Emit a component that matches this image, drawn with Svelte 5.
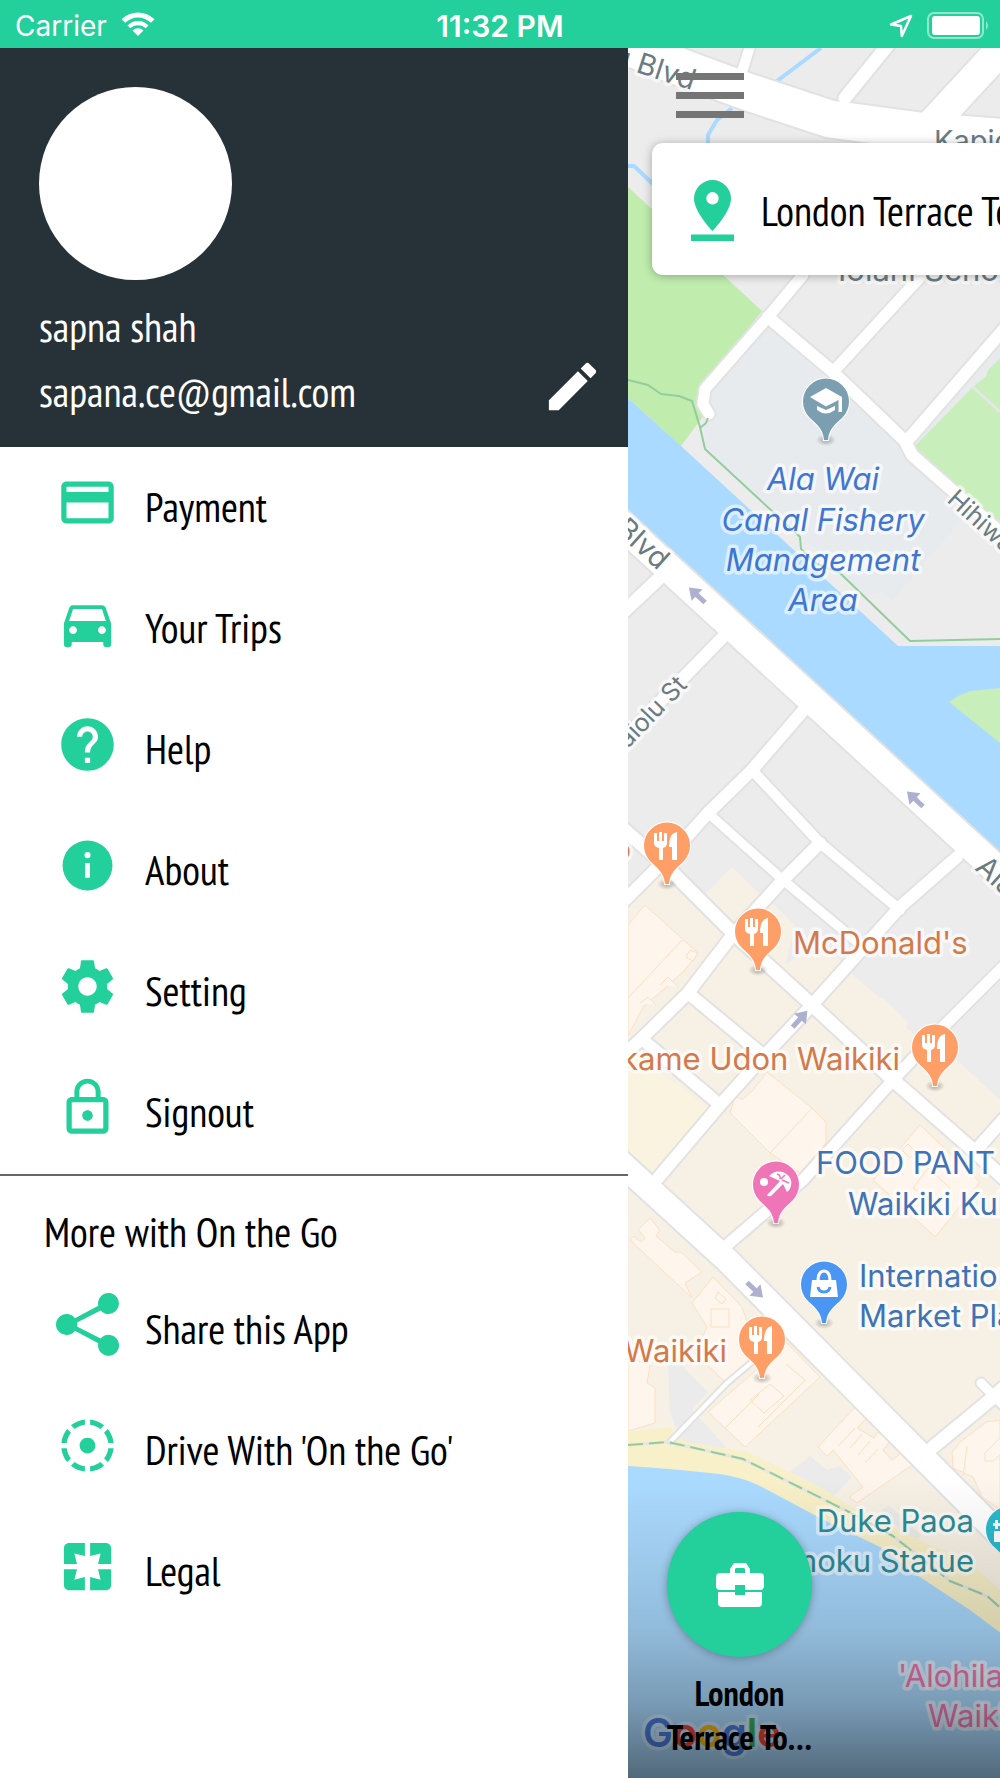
<script>
  // main entries of the drawer, the icons are on a 24x24 grid
  const menu = [
    {
      label: "Payment",
      icon: "M20 4H4c-1.11 0-1.99.89-1.99 2L2 18c0 1.11.89 2 2 2h16c1.11 0 2-.89 2-2V6c0-1.11-.89-2-2-2zm0 14H4v-6h16v6zm0-10H4V6h16v2z",
    },
    {
      label: "Your Trips",
      icon: "M18.92 6.01C18.72 5.42 18.16 5 17.5 5h-11c-.66 0-1.21.42-1.42 1.01L3 12v8c0 .55.45 1 1 1h1c.55 0 1-.45 1-1v-1h12v1c0 .55.45 1 1 1h1c.55 0 1-.45 1-1v-8l-2.08-5.99zM6.5 16c-.83 0-1.5-.67-1.5-1.5S5.67 13 6.5 13s1.5.67 1.5 1.5S7.33 16 6.5 16zm11 0c-.83 0-1.5-.67-1.5-1.5s.67-1.5 1.5-1.5 1.5.67 1.5 1.5-.67 1.5-1.5 1.5zM5 11l1.5-4.5h11L19 11H5z",
    },
    {
      label: "Help",
      icon: "M12 2C6.48 2 2 6.48 2 12s4.48 10 10 10 10-4.48 10-10S17.52 2 12 2zm1 17h-2v-2h2v2zm2.07-7.75l-.9.92C13.45 12.9 13 13.5 13 15h-2v-.5c0-1.1.45-2.1 1.17-2.83l1.24-1.26c.37-.36.59-.86.59-1.41 0-1.1-.9-2-2-2s-2 .9-2 2H8c0-2.21 1.79-4 4-4s4 1.79 4 4c0 .88-.36 1.68-.93 2.25z",
    },
    {
      label: "About",
      icon: "M12 2.5a9.5 9.5 0 1 0 0 19 9.5 9.5 0 0 0 0-19zm.9 14.2h-1.8V11h1.8v5.7zM12 9.2a1.15 1.15 0 1 1 0-2.3 1.15 1.15 0 0 1 0 2.3z",
    },
    {
      label: "Setting",
      icon: "M19.43 12.98c.04-.32.07-.64.07-.98s-.03-.66-.07-.98l2.11-1.65c.19-.15.24-.42.12-.64l-2-3.46c-.12-.22-.39-.3-.61-.22l-2.49 1c-.52-.4-1.08-.73-1.69-.98l-.38-2.65C14.46 2.18 14.25 2 14 2h-4c-.25 0-.46.18-.49.42l-.38 2.65c-.61.25-1.17.59-1.69.98l-2.49-1c-.23-.09-.49 0-.61.22l-2 3.46c-.13.22-.07.49.12.64l2.11 1.65c-.04.32-.07.65-.07.98s.03.66.07.98l-2.11 1.65c-.19.15-.24.42-.12.64l2 3.46c.12.22.39.3.61.22l2.49-1c.52.4 1.08.73 1.69.98l.38 2.65c.03.24.24.42.49.42h4c.25 0 .46-.18.49-.42l.38-2.65c.61-.25 1.17-.59 1.69-.98l2.49 1c.23.09.49 0 .61-.22l2-3.46c.12-.22.07-.49-.12-.64l-2.11-1.65zM12 15.5c-1.93 0-3.5-1.57-3.5-3.5s1.57-3.5 3.5-3.5 3.5 1.57 3.5 3.5-1.57 3.5-3.5 3.5z",
    },
    {
      label: "Signout",
      icon: "M12 17c1.1 0 2-.9 2-2s-.9-2-2-2-2 .9-2 2 .9 2 2 2zm6-9h-1V6c0-2.76-2.24-5-5-5S7 3.24 7 6v2H6c-1.1 0-2 .9-2 2v10c0 1.1.9 2 2 2h12c1.1 0 2-.9 2-2V10c0-1.1-.9-2-2-2zM8.9 6c0-1.71 1.39-3.1 3.1-3.1s3.1 1.39 3.1 3.1v2H8.9V6zM18 20H6V10h12v10z",
    },
  ];

  const more = [
    {
      label: "Share this App",
      icon: "M20 0a4 4 0 0 0-3.9 4.9L7.2 9.6A4 4 0 1 0 7.2 14.4l8.9 4.7A4 4 0 1 0 17 17.3L8 12.8a4 4 0 0 0 0-1.6l9-4.5A4 4 0 1 0 20 0z",
    },
    {
      label: "Drive With 'On the Go'",
      icon: "M11 4.07V2.05c-2.01.2-3.84 1-5.32 2.21L7.1 5.69c1.11-.86 2.44-1.44 3.9-1.62zm7.32.19C16.84 3.05 15.01 2.25 13 2.05v2.02c1.46.18 2.79.76 3.9 1.62l1.42-1.43zM19.93 11h2.02c-.2-2.01-1-3.84-2.21-5.32L18.31 7.1c.86 1.11 1.44 2.44 1.62 3.9zM5.69 7.1L4.26 5.68C3.05 7.16 2.25 8.99 2.05 11h2.02c.18-1.46.76-2.79 1.62-3.9zM4.07 13H2.05c.2 2.01 1 3.84 2.21 5.32l1.43-1.43c-.86-1.1-1.44-2.43-1.62-3.89zM15 12c0-1.66-1.34-3-3-3s-3 1.34-3 3 1.34 3 3 3 3-1.34 3-3zm3.31 4.9l1.43 1.43c1.21-1.48 2.01-3.32 2.21-5.32h-2.02c-.18 1.45-.76 2.78-1.62 3.89zM13 19.93v2.02c2.01-.2 3.84-1 5.32-2.21l-1.43-1.43c-1.1.86-2.43 1.44-3.89 1.62zm-7.32-.19C7.16 20.95 9 21.75 11 21.95v-2.02c-1.46-.18-2.79-.76-3.9-1.62l-1.42 1.43z",
    },
    {
      label: "Legal",
      icon: "M3 5v6h5L7 7l4 1V3H5c-1.1 0-2 .9-2 2zm5 8H3v6c0 1.1.9 2 2 2h6v-5l-4 1 1-4zm9 4l-4-1v5h6c1.1 0 2-.9 2-2v-6h-5l1 4zm2-14h-6v5l4-1-1 4h5V5c0-1.1-.9-2-2-2z",
    },
  ];

  // streets of the map, w is the width of the road
  const roads = [
    { d: "M600 36 688 70 748 92 830 119 920 131 1010 138", w: 37 },
    { d: "M752 40 741 75", w: 10 },
    { d: "M892 40 845 98", w: 13 },
    { d: "M1040 7 934 122", w: 30 },
    { d: "M803 275 768 317 705 389 703 404 709 414", w: 11 },
    { d: "M768 317 833 372 905 441 912 455 1010 541", w: 12 },
    { d: "M922 275 833 372", w: 11 },
    { d: "M907 441 1010 322", w: 12 },
    { d: "M600 505 1020 891", w: 28 },
    { d: "M668 570 618 617", w: 13 },
    { d: "M723 637 618 745", w: 12 },
    { d: "M802 712 752 770 708 813 675 850 618 907", w: 12 },
    { d: "M957 857 900 907 812 1005 765 1055 720 1105 658 1178", w: 12 },
    { d: "M820 843 783 880 731 937 688 993 640 1040 618 1060", w: 12 },
    { d: "M752 770 820 843 900 910", w: 10 },
    { d: "M708 813 783 880 862 946", w: 9 },
    { d: "M618 824 670 870 733 933 812 1005 893 1080 973 1150 1010 1184", w: 13 },
    { d: "M688 993 763 1055", w: 12 },
    { d: "M643 1040 720 1105", w: 12 },
    { d: "M1010 960 940 1030 893 1080 803 1180 727 1245", w: 11 },
    { d: "M1010 1112 977 1149", w: 12 },
    { d: "M610 1153 727 1260 850 1384 1010 1545", w: 24 },
    { d: "M933 1447 990 1400 1010 1382", w: 13 },
    { d: "M981 1383 1010 1412", w: 9 },
    { d: "M671 1441 727 1383 752 1362", w: 4 },
  ];

  const buildings = [
    "M645 905 698 953 685 970 663 990 643 1007 628 1036V925z",
    "M628 998 682 940M690 950 698 953 693 961 686 957zM660 985l8-8 10 10M640 1003l8-6 8 8",
    "M767 1072 812 1108 826 1122V1143L800 1173 770 1153 730 1113 735 1097 743 1099 753 1090z",
    "M812 1108 770 1153",
    "M920 1125 980 1182 935 1237 873 1180z",
    "M928 1168 950 1188 937 1203 913 1188zM902 1150l6-6 8 8-6 6z",
    "M650 1218 660 1230 656 1236 675 1252 681 1252 702 1272 685 1283 692 1298 630 1240 634 1236 641 1242 645 1238 638 1230z",
    "M713 1277 742 1307 750 1330 748 1363 725 1382 695 1353 707 1327 692 1303z",
    "M711 1309h18v18h-18zM718 1292l8 7-4 5-7-6z",
    "M787 1343 820 1377 745 1447 708 1412z",
    "M786 1364 805 1380 758 1427M725 1428l34-34M770 1384 784 1396 764 1413 750 1400zM628 1358l22 7-3 18 8 5v35l-27 8z",
    "M855 1407 867 1418 857 1428 874 1438 878 1432 890 1441 883 1450 892 1460 902 1452 915 1463 857 1503 849 1497 863 1487 833 1450 827 1456 818 1447z",
    "M855 1428 838 1446M862 1434l-12 14M870 1441l-12 14M878 1449l-13 14",
    "M1000 1420 986 1422 960 1442 952 1452 953 1468 973 1477 982 1497 1000 1509z",
    "M967 1446l-4 30M1000 1438l-15 15v8h8l7-6",
  ];

  const arrows = [
    { x: 697, y: 595, r: -47 },
    { x: 915, y: 799, r: -47 },
    { x: 800, y: 1019, r: 42 },
    { x: 755, y: 1290, r: 133 },
  ];

  const pins = [
    { x: 826, y: 401, color: "#7b9eb1", kind: "school" },
    { x: 667, y: 845, color: "#ff9e67", kind: "food" },
    { x: 758, y: 931, color: "#ff9e67", kind: "food" },
    { x: 935, y: 1047, color: "#ff9e67", kind: "food" },
    { x: 762, y: 1339, color: "#ff9e67", kind: "food" },
    { x: 776, y: 1184, color: "#f075b6", kind: "beach" },
    { x: 824, y: 1284, color: "#4b96f3", kind: "shop" },
    { x: 1009, y: 1529, color: "#2bb9cd", kind: "sight" },
  ];

  const streets = [
    { t: "u Blvd", x: 611, y: 64, r: 18, s: 29 },
    { t: "Blvd", x: 614, y: 531, r: 42, s: 29 },
    { t: "Kaiolu St", x: 616, y: 761, r: -46, s: 25 },
    { t: "Hihiwai St", x: 946, y: 501, r: 42, s: 25 },
    { t: "Ala Wai Blvd", x: 974, y: 869, r: 42, s: 29 },
    { t: "Kapiolani", x: 934, y: 151, r: 0, s: 29 },
    { t: "Iolani School", x: 838, y: 281, r: 0, s: 31 },
  ];

  const places = [
    { t: "Ala Wai", x: 823, y: 490, a: "middle", c: "park" },
    { t: "Canal Fishery", x: 823, y: 531, a: "middle", c: "park" },
    { t: "Management", x: 823, y: 571, a: "middle", c: "park" },
    { t: "Area", x: 823, y: 611, a: "middle", c: "park" },
    { t: "o", x: 631, y: 860, a: "end", c: "food" },
    { t: "McDonald's", x: 793, y: 954, a: "start", c: "food" },
    { t: "kame Udon Waikiki", x: 900, y: 1070, a: "end", c: "food" },
    { t: "Waikiki", x: 727, y: 1362, a: "end", c: "food" },
    { t: "FOOD PANT", x: 816, y: 1174, a: "start", c: "shop" },
    { t: "Waikiki Kuh", x: 848, y: 1215, a: "start", c: "shop" },
    { t: "International", x: 859, y: 1287, a: "start", c: "shop" },
    { t: "Market Place", x: 859, y: 1327, a: "start", c: "shop" },
    { t: "Duke Paoa", x: 974, y: 1532, a: "end", c: "sight" },
    { t: "Kahanamoku Statue", x: 974, y: 1572, a: "end", c: "sight" },
    { t: "'Alohilani", x: 898, y: 1687, a: "start", c: "hotel" },
    { t: "Waikiki", x: 928, y: 1727, a: "start", c: "hotel" },
  ];
</script>

{#snippet row(item)}
  <li>
    <a class="row" href="#menu">
      <svg class="icon" viewBox="0 0 24 24"><path d={item.icon} /></svg>
      <span>{item.label}</span>
    </a>
  </li>
{/snippet}

<div class="app">
  <div class="status">
    <div class="side">
      <span>Carrier</span>
      <svg class="wifi" viewBox="0 0 34 24">
        <path d="M17 24l-5.5-5.6a8 8 0 0 1 11 0z" />
        <path d="M6.5 13.4a15 15 0 0 1 21 0l-2.8 2.9a11 11 0 0 0-15.4 0z" />
        <path d="M.5 7.2a23.5 23.5 0 0 1 33 0l-3.6 3.6a18.5 18.5 0 0 0-25.8 0z" />
      </svg>
    </div>
    <strong>11:32 PM</strong>
    <div class="side right">
      <svg class="locate" viewBox="0 0 24 24">
        <path d="M22 2 2 10.5l10 1.5.8 10z" />
      </svg>
      <svg class="battery" viewBox="0 0 64 28">
        <rect class="shell" x="1" y="1" width="55" height="25" rx="6" />
        <rect x="5" y="4" width="48" height="19" rx="3" />
        <path class="nub" d="M59 9q4 4.5 0 9z" />
      </svg>
    </div>
  </div>

  <div class="stage">
    <aside class="drawer">
      <header>
        <div class="avatar"></div>
        <div class="line">sapna shah</div>
        <div class="line">
          <span>sapana.ce@gmail.com</span>
          <button class="edit" aria-label="Edit profile">
            <svg class="icon" viewBox="0 0 24 24">
              <path d="M3 17.25V21h3.75L17.81 9.94l-3.75-3.75L3 17.25zM20.71 7.04c.39-.39.39-1.02 0-1.41l-2.34-2.34c-.39-.39-1.02-.39-1.41 0l-1.83 1.83 3.75 3.75 1.83-1.83z" />
            </svg>
          </button>
        </div>
      </header>

      <nav>
        <ul>
          {#each menu as item}
            {@render row(item)}
          {/each}
        </ul>
        <h2>More with On the Go</h2>
        <ul>
          {#each more as item}
            {@render row(item)}
          {/each}
        </ul>
      </nav>
    </aside>

    <main>
      <svg class="map" viewBox="628 48 372 1730" preserveAspectRatio="xMinYMin slice">
        <defs>
          <linearGradient id="shade" x1="0" y1="0" x2="0" y2="1">
            <stop offset="0" stop-color="#000" stop-opacity="0" />
            <stop offset=".5" stop-color="#000" stop-opacity=".14" />
            <stop offset=".75" stop-color="#000" stop-opacity=".29" />
            <stop offset="1" stop-color="#000" stop-opacity=".52" />
          </linearGradient>
          <radialGradient id="spot">
            <stop offset="0" stop-color="#000" stop-opacity=".3" />
            <stop offset="1" stop-color="#000" stop-opacity="0" />
          </radialGradient>
        </defs>

        <rect x="628" y="48" width="400" height="1740" fill="#ececec" />

        <!-- land -->
        <path fill="#c0ecae" d="M628 187 762 311 704 385V415L681 446 628 398z" />
        <path fill="#e7ebee" d="M767 325 915 460 962 518 893 600 880 592 866 596 705 447 704 380zM908 440 1000 338V360L913 449z" />
        <path fill="#c8efbb" d="M913 448 973 387 986 376 988 370 1000 358V530z" />
        <path class="walk" d="M973 387 1000 412" />
        <path fill="#f7f1e5" d="M628 905 665 872 702 898 732 867 762 896 775 906 795 925 785 965 800 955 830 952 842 962 855 977 880 998 883 998 908 1022 906 1028 957 1060 1000 1100V1600L628 1440z" />
        <path fill="#faf3e0" d="M628 1050 712 1110 653 1173 628 1151z" />
        <path fill="#ebebeb" d="M668 1366H682L708 1392 692 1410 728 1449 682 1442 670 1413zM790 1472 810 1456 827 1470 840 1466 852 1477 833 1497zM880 1512 889 1505 921 1535 915 1542z" />
        {#each buildings as d}
          <path class="building" {d} />
        {/each}

        <!-- water and beach -->
        <path fill="#aadaff" d="M628 398 681 446 898 646H1030V880L628 510z" />
        <path fill="#c8efbb" d="M949 702 958 696 970 691 1000 688V743z" />
        <path class="creek" d="M821 48 777 81M732 108 717 120 708 135V146M626 166H634L654 185" />
        <path fill="#f8f0c8" d="M628 1432 672 1427 673 1433 687 1442 747 1452 820 1487 853 1508 920 1540 973 1565 1000 1590V1660H628z" />
        <path fill="#aadaff" d="M628 1466 670 1469 720 1474Q745 1478 760 1486L820 1518 880 1547 920 1577 970 1610 1030 1655V1790H628z" />

        {#each roads as road}
          <path class="casing" d={road.d} stroke-width={road.w + 4} />
        {/each}
        {#each roads as road}
          <path class="road" d={road.d} stroke-width={road.w} />
        {/each}

        <path class="trail" d="M628 380 648 385 661 394 679 396 692 401 700 427 705 449 800 537 801 549 817 564 840 573 910 641 1000 639M708 418 706 423 700 428" />
        <path class="walk" d="M628 1445 668 1442 743 1459 853 1514 893 1536 950 1581 987 1596 1003 1610" />
        <path class="trail dashed" d="M628 1445 668 1442 743 1459 853 1514 893 1536 950 1581 987 1596 1003 1610" />

        {#each arrows as a}
          <path class="arrow" d="M0-11 8 0H2.5V11H-2.5V0H-8z" transform="translate({a.x} {a.y}) rotate({a.r})" />
        {/each}

        {#each streets as s}
          <text class="street" font-size={s.s} transform="translate({s.x} {s.y}) rotate({s.r})">{s.t}</text>
        {/each}

        {#each pins as pin}
          <g transform="translate({pin.x} {pin.y})">
            <ellipse cy="39" rx="10" ry="6" fill="url(#spot)" />
            <path class="pin" fill={pin.color} d="M-2 39C-3 27-10 23-16.5 16.5A23 23 0 1 1 16.5 16.5C10 23 3 27 2 39z" />
            {#if pin.kind === "food"}
              <path fill="#fff" d="M-13-12h3v8h2v-9h3v9h2v-8h3v10q0 4-4 5v12h-4V3q-5-1-5-5zM10-13V15H5V2H2Q2-12 10-13z" />
            {:else if pin.kind === "school"}
              <path fill="#fff" d="M0-13 16-4V11H12.5V-1L0 5.5-16-4zM-9 5 0 9 9 5V9Q0 16-9 9z" />
            {:else if pin.kind === "beach"}
              <circle cx="-12" cy="-2" r="4" fill="#fff" />
              <path fill="#fff" d="M-8 10 4-3-7-8Q0-15 9-11 17-6 15 2 14 6 11 8L7 0-5 12Q-8 13-9 11z" />
              <path class="rib" stroke={pin.color} d="M4-5Q5-9 1-10M6-4 13-1M5-5 9-9" />
            {:else if pin.kind === "shop"}
              <path class="handle" d="M-6-3Q-6-13 0-13T6-3" />
              <path fill="#fff" d="M-12-4H12L14 13H-14z" />
              <path class="smile" stroke={pin.color} d="M-6 3Q-5 8 0 8T6 3" />
            {:else}
              <path fill="#fff" d="M-14-9h3v3h3v3h-3v3h-3v-3h-2v-3h2zM-15 2H14V13H-15z" />
            {/if}
          </g>
        {/each}

        {#each places as p}
          <text class="place {p.c}" x={p.x} y={p.y} text-anchor={p.a}>{p.t}</text>
        {/each}

        <text class="google" x="643" y="1747"
          ><tspan fill="#4a7de0">G</tspan><tspan fill="#e8453a">o</tspan><tspan fill="#f6b90f">o</tspan><tspan fill="#4a7de0">g</tspan><tspan fill="#3fae56">l</tspan><tspan fill="#e8453a">e</tspan></text>

        <rect x="628" y="1478" width="400" height="300" fill="url(#shade)" />
      </svg>

      <button class="burger" aria-label="Menu">
        <span></span>
        <span></span>
        <span></span>
      </button>

      <div class="search">
        <svg class="spot" viewBox="0 0 44 62">
          <path d="M22.5 0A18.5 18.5 0 0 0 4 18.5C4 32 22.5 51 22.5 51S41 32 41 18.5A18.5 18.5 0 0 0 22.5 0zm0 24.5a6.2 6.2 0 1 1 0-12.4 6.2 6.2 0 0 1 0 12.4zM1 54.5h43V61H1z" />
        </svg>
        <span>London Terrace Towers</span>
      </div>

      <button class="work">
        <span class="disc">
          <svg viewBox="0 0 48 44">
            <path d="M14 10V6l4-6h12l4 6v4h10q4 0 4 4v9q0 4-4 4H29v-5H19v5H4q-4 0-4-4v-9q0-4 4-4zm5 0h10V6l-1-1h-8l-1 1zM2 29h17v3h10v-3h17v11q0 4-4 4H6q-4 0-4-4z" />
          </svg>
        </span>
        <span class="name">London<br />Terrace To…</span>
      </button>
    </main>
  </div>
</div>

<style>
  :global(body) {
    margin: 0;
  }

  * {
    box-sizing: border-box;
  }

  .app {
    display: flex;
    flex-direction: column;
    min-height: 100vh;
    font-family: "PT Sans Narrow", "Liberation Sans Narrow", "Open Sans", sans-serif;
    font-size: 41px;
    color: #000;
  }

  button {
    padding: 0;
    border: 0;
    background: none;
    font: inherit;
    color: inherit;
  }

  /* status bar */
  .status {
    display: grid;
    grid-template-columns: 1fr auto 1fr;
    align-items: center;
    height: 48px;
    padding: 3px 15px 0;
    background: #23cf9b;
    color: #fff;
    fill: #fff;
    font-family: Inter, sans-serif;
    font-size: 28px;
    line-height: 44px;
  }

  .status strong {
    font-size: 30px;
    font-weight: 600;
  }

  .side {
    display: flex;
    align-items: center;
    gap: 14px;
  }

  .right {
    justify-content: flex-end;
    margin-right: -6px;
  }

  .wifi {
    width: 34px;
    height: 24px;
    margin-bottom: 3px;
  }

  .locate {
    width: 24px;
    height: 24px;
    fill: none;
    stroke: #fff;
    stroke-width: 2.5;
    stroke-linejoin: round;
  }

  .battery {
    width: 64px;
    height: 28px;
  }

  .shell {
    fill: none;
    stroke: #fff;
    stroke-width: 2;
    opacity: 0.5;
  }

  .nub {
    opacity: 0.5;
  }

  .stage {
    display: flex;
    flex: 1;
  }

  /* drawer */
  .drawer {
    width: 62.8%;
    background: #fff;
  }

  header {
    padding: 39px 24px 23px 39px;
    background: #273238;
    color: #fff;
  }

  .avatar {
    width: 193px;
    height: 193px;
    margin-bottom: 14px;
    border-radius: 50%;
    background: #fff;
  }

  .line {
    display: flex;
    align-items: center;
    justify-content: space-between;
    height: 65px;
  }

  .edit {
    margin-bottom: 10px;
    fill: #fff;
  }

  .icon {
    display: block;
    flex: none;
    width: 63px;
    height: 63px;
  }

  nav {
    padding-top: 1px;
  }

  ul {
    margin: 0;
    padding: 0;
    list-style: none;
  }

  .row {
    display: flex;
    align-items: center;
    gap: 26px;
    height: 121px;
    padding: 0 20px 4px 56px;
    color: #000;
    text-decoration: none;
  }

  .row .icon {
    margin-bottom: 9px;
    fill: #23cf9b;
  }

  h2 {
    margin: 0;
    padding: 32px 44px 14px;
    border-top: 2px solid #666;
    font-size: 41px;
    font-weight: 400;
    line-height: 48px;
  }

  /* map side */
  main {
    position: relative;
    display: flex;
    flex: 1;
    flex-direction: column;
    align-items: flex-start;
    min-width: 0;
    overflow: hidden;
  }

  .map {
    position: absolute;
    inset: 0;
    width: 100%;
    height: 100%;
    font-family: Inter, sans-serif;
  }

  .casing,
  .road,
  .trail,
  .walk,
  .creek {
    fill: none;
    stroke-linejoin: round;
  }

  .casing {
    stroke: #e2e2e2;
    stroke-linecap: round;
  }

  .road {
    stroke: #fff;
    stroke-linecap: round;
  }

  .creek {
    stroke: #aadaff;
    stroke-width: 4;
  }

  .walk {
    stroke: #e6e6e6;
    stroke-width: 3;
  }

  .trail {
    stroke: #93cd9f;
    stroke-width: 2;
  }

  .dashed {
    stroke-dasharray: 15 6;
  }

  .building {
    fill: #fef5ec;
    stroke: #fde0c0;
    stroke-width: 1;
  }

  .arrow {
    fill: #adb0ce;
  }

  .pin {
    stroke: #fff;
    stroke-width: 2;
    paint-order: stroke;
  }

  .rib {
    fill: none;
    stroke-width: 1.5;
  }

  .handle {
    fill: none;
    stroke: #fff;
    stroke-width: 3;
  }

  .smile {
    fill: none;
    stroke-width: 3;
  }

  /* white halo round the labels */
  text {
    stroke: rgba(255, 255, 255, 0.6);
    stroke-width: 7;
    stroke-linejoin: round;
    paint-order: stroke;
  }

  .street {
    fill: #6a7b82;
  }

  .place {
    font-size: 31px;
  }

  .park {
    fill: #3f76d2;
    font-style: italic;
  }

  .food {
    fill: #d27a4c;
  }

  .shop {
    fill: #3f73b5;
  }

  .sight {
    fill: #2b8c98;
  }

  .hotel {
    fill: #ee78b4;
  }

  .google {
    font-size: 40px;
    font-weight: 600;
    stroke: rgba(255, 255, 255, 0.4);
  }

  .burger {
    position: relative;
    display: flex;
    flex-direction: column;
    gap: 12px;
    width: 68px;
    margin: 25px 0 25px 48px;
  }

  .burger span {
    height: 7px;
    background: #757575;
  }

  .search {
    position: relative;
    display: flex;
    align-items: center;
    gap: 27px;
    width: 560px;
    height: 132px;
    padding: 4px 0 0 38px;
    border-radius: 11px;
    background: #fff;
    box-shadow: 0 1px 10px rgba(0, 0, 0, 0.3);
    margin-left: 24px;
    white-space: nowrap;
  }

  .search span {
    padding-bottom: 2px;
  }

  .spot {
    flex: none;
    width: 44px;
    height: 62px;
    fill: #23cf9b;
  }

  .work {
    position: relative;
    display: flex;
    flex-direction: column;
    align-items: center;
    gap: 14px;
    width: 145px;
    margin: auto 0 19px 39px;
  }

  .disc {
    display: grid;
    place-items: center;
    width: 145px;
    height: 145px;
    border-radius: 50%;
    background: #23cf9b;
    box-shadow: 0 1px 8px rgba(0, 0, 0, 0.3);
  }

  .disc svg {
    width: 48px;
    height: 44px;
    fill: #fff;
  }

  .name {
    font-size: 34px;
    font-weight: 700;
    line-height: 44px;
    white-space: nowrap;
  }
</style>
